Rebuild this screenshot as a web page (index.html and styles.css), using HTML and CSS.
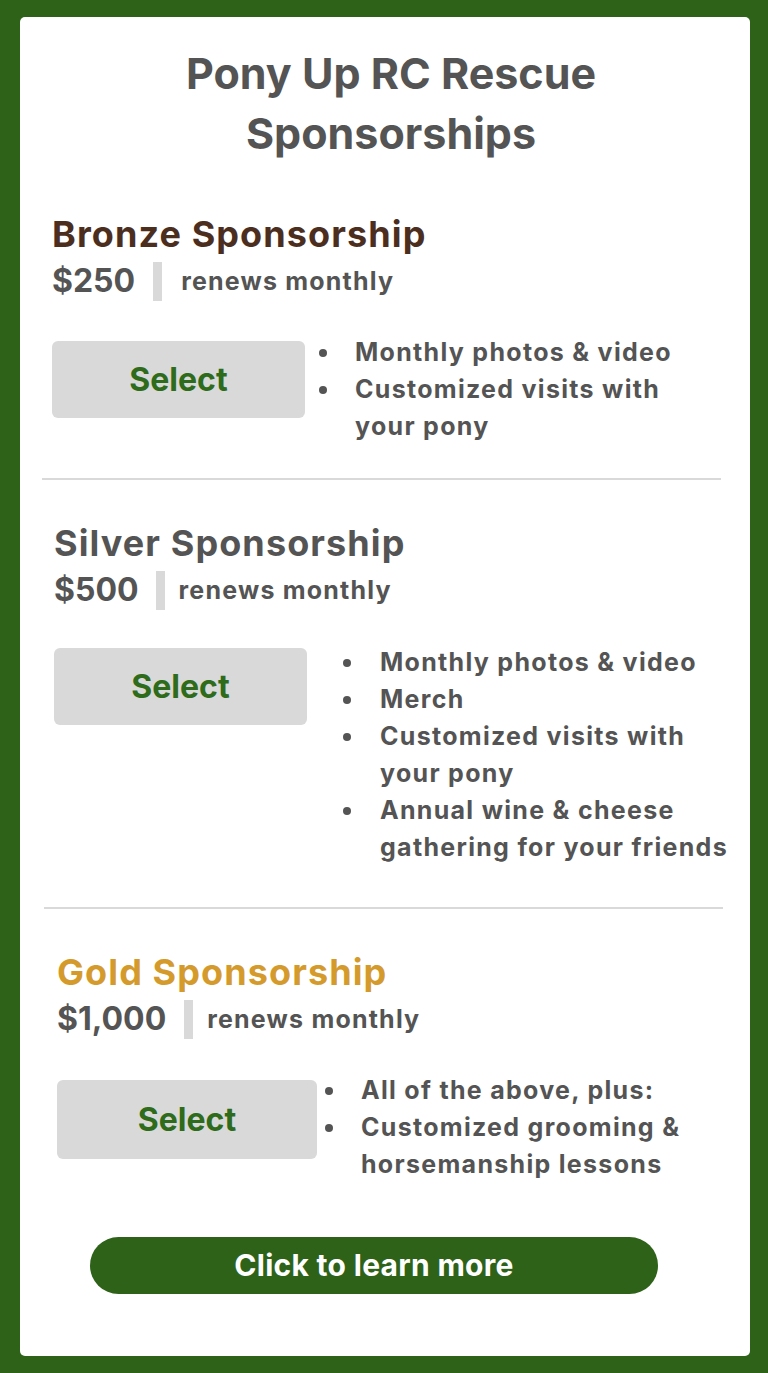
FILE: index.html
```html
<!DOCTYPE html>
<html lang="en">
<head>
<meta charset="utf-8">
<title>Pony Up RC Rescue Sponsorships</title>
<link rel="stylesheet" href="styles.css">
</head>
<body>
<main class="card">
  <h1 class="title">Pony Up RC Rescue<br>Sponsorships</h1>

  <section class="tier tier--bronze">
    <h2 class="tier-name">Bronze Sponsorship</h2>
    <div class="price-row"><span class="price">$250</span><span class="sep"></span><span class="renew">renews monthly</span></div>
    <div class="tier-body">
      <button class="select">Select</button>
      <ul class="perks">
        <li>Monthly photos &amp; video</li>
        <li>Customized visits with your pony</li>
      </ul>
    </div>
  </section>

  <hr class="divider">

  <section class="tier tier--silver">
    <h2 class="tier-name">Silver Sponsorship</h2>
    <div class="price-row"><span class="price">$500</span><span class="sep"></span><span class="renew">renews monthly</span></div>
    <div class="tier-body">
      <button class="select">Select</button>
      <ul class="perks">
        <li>Monthly photos &amp; video</li>
        <li>Merch</li>
        <li>Customized visits with your pony</li>
        <li>Annual wine &amp; cheese gathering for your friends</li>
      </ul>
    </div>
  </section>

  <hr class="divider divider--silver">

  <section class="tier tier--gold">
    <h2 class="tier-name">Gold Sponsorship</h2>
    <div class="price-row"><span class="price">$1,000</span><span class="sep"></span><span class="renew">renews monthly</span></div>
    <div class="tier-body">
      <button class="select">Select</button>
      <ul class="perks">
        <li>All of the above, plus:</li>
        <li>Customized grooming &amp; horsemanship lessons</li>
      </ul>
    </div>
  </section>

  <a class="cta" href="#">Click to learn more</a>
</main>
</body>
</html>
```

FILE: styles.css
```css
* { box-sizing: border-box; }

html, body {
  margin: 0;
  padding: 0;
}

body {
  background: #2e6219;
  font-family: Inter, "Open Sans", "Liberation Sans", sans-serif;
  font-weight: 700;
  color: #545454;
  padding: 17px 18px 17px 20px;
}

.card {
  background: #ffffff;
  border-radius: 5px;
  height: 1339px;
  padding: 26px 0 0 0;
  display: flex;
  flex-direction: column;
}

.title {
  margin: 0;
  text-align: center;
  font-size: 43px;
  line-height: 60px;
  font-weight: 700;
  color: #545454;
  padding-left: 12px;
}

.tier { display: flex; flex-direction: column; }
.tier--bronze { margin-top: 48px; padding-left: 32px; }
.tier--silver { margin-top: 40px; padding-left: 34px; }
.tier--gold { margin-top: 40px; padding-left: 37px; }

.tier-name {
  margin: 0;
  font-size: 36px;
  line-height: 46px;
  font-weight: 700;
  letter-spacing: 1.1px;
}
.tier--bronze .tier-name { color: #4b2e1e; }
.tier--silver .tier-name { color: #545454; }
.tier--gold .tier-name { color: #d49b2c; }

.price-row {
  display: flex;
  align-items: center;
  height: 40px;
  margin-top: 4px;
}
.price {
  font-size: 32px;
  line-height: 40px;
}
.sep {
  width: 9px;
  height: 39px;
  background: #d9d9d9;
  margin: 0 19px 0 18px;
}
.tier--silver .sep { margin: 0 14px 0 17px; }
.tier--gold .sep { margin: 0 14px 0 18px; }
.renew {
  font-size: 25px;
  line-height: 40px;
  letter-spacing: 1.2px;
}

.tier-body {
  display: flex;
  align-items: flex-start;
  margin-top: 40px;
}
.tier--silver .tier-body { margin-top: 38px; }
.tier--gold .tier-body { margin-top: 41px; }

.select {
  flex: none;
  width: 253px;
  height: 77px;
  border: 0;
  border-radius: 6px;
  background: #d9d9d9;
  color: #2e6b1a;
  font-family: inherit;
  font-weight: 700;
  font-size: 32px;
  padding: 0;
}
.tier--gold .select { width: 260px; height: 79px; }

.perks {
  list-style: none;
  margin: -7px 0 0 10px;
  padding: 0;
  max-width: 396px;
  font-size: 25px;
  line-height: 37px;
  letter-spacing: 1.3px;
}
.tier--silver .perks { margin: -4px 0 0 32px; }
.tier--gold .perks { margin: -8px 0 0 4px; }

.perks li {
  position: relative;
  padding-left: 40px;
}
.perks li::before {
  content: "";
  position: absolute;
  left: 4px;
  top: 15px;
  width: 8px;
  height: 8px;
  border-radius: 50%;
  background: #545454;
}
.tier--silver .perks li { padding-left: 41px; }
.tier--gold .perks li { padding-left: 40px; }

.divider {
  border: 0;
  height: 2px;
  background: #d9d9d9;
  margin: 33px 29px 0 22px;
}
.divider--silver {
  margin: 41px 27px 0 24px;
}

.cta {
  align-self: flex-start;
  margin: 54px 0 0 70px;
  width: 568px;
  height: 57px;
  border-radius: 29px;
  background: #2e6219;
  color: #ffffff;
  text-decoration: none;
  font-size: 30px;
  line-height: 57px;
  text-align: center;
  letter-spacing: 0.3px;
}
```
